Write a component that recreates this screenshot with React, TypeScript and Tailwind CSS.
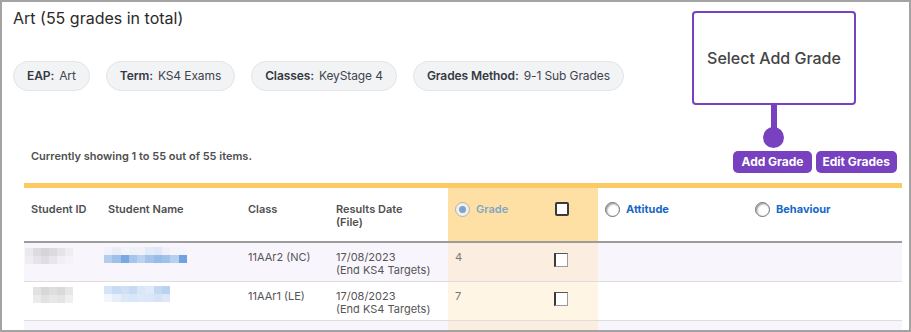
import React from 'react';

const cols = 'grid grid-cols-[77px_140px_88px_119px_100px_50px_150px_1fr]';

const chips = [
  { label: 'EAP:', value: 'Art' },
  { label: 'Term:', value: 'KS4 Exams' },
  { label: 'Classes:', value: 'KeyStage 4' },
  { label: 'Grades Method:', value: '9-1 Sub Grades' },
];

const rows = [
  {
    cls: '11AAr2 (NC)',
    grade: '4',
    rowBg: 'bg-[#f9f5fd]',
    gradeBg: 'bg-[#fbeddf]',
    idTop: ['bg-[#ebe9ed]', 'bg-[#dddbe0]', 'bg-[#d6d4d9]', 'bg-[#dcdadf]', 'bg-[#e5e3e8]', 'bg-[#efedf2]'],
    idBottom: ['bg-[#efedf1]', 'bg-[#e6e4e9]', 'bg-[#e0dee3]', 'bg-[#e8e6eb]', 'bg-[#f1eff4]', 'bg-[#f5f3f8]'],
    nameTop: ['bg-[#f3f1fb]', 'bg-[#e9edf9]', 'bg-[#f4f2fb]', 'bg-[#eef0fa]', 'bg-[#f2f1fb]', 'bg-[#e4ebf8]', 'bg-[#dfe8f7]', 'bg-[#f1f0fa]', 'bg-[#f5f3fc]', 'bg-[#f5f3fc]'],
    nameBottom: ['bg-[#b3cdee]', 'bg-[#9ec0ea]', 'bg-[#7aa9e2]', 'bg-[#a6c5ec]', 'bg-[#bad3f1]', 'bg-[#a5c4ec]', 'bg-[#98bce9]', 'bg-[#9fc1eb]', 'bg-[#b6d0f0]', 'bg-[#6fa2e0]'],
  },
  {
    cls: '11AAr1 (LE)',
    grade: '7',
    rowBg: 'bg-white',
    gradeBg: 'bg-[#fef5e4]',
    idTop: ['bg-[#ffffff]', 'bg-[#e2e2e4]', 'bg-[#d7d7d9]', 'bg-[#dededf]', 'bg-[#d9d9db]', 'bg-[#e6e6e7]'],
    idBottom: ['bg-[#ffffff]', 'bg-[#ebebec]', 'bg-[#e2e2e3]', 'bg-[#e8e8e9]', 'bg-[#e4e4e5]', 'bg-[#efeff0]'],
    nameTop: ['bg-[#d6e4f7]', 'bg-[#c8dbf4]', 'bg-[#cfe0f5]', 'bg-[#c6daf4]', 'bg-[#d9e6f7]', 'bg-[#e0ebf9]', 'bg-[#c3d8f3]', 'bg-[#b9d2f2]', 'bg-[#ffffff]', 'bg-[#ffffff]'],
    nameBottom: ['bg-[#f1f5fc]', 'bg-[#e6eef9]', 'bg-[#dce8f8]', 'bg-[#d9e6f7]', 'bg-[#dde8f8]', 'bg-[#dbe7f8]', 'bg-[#d6e3f6]', 'bg-[#dce7f7]', 'bg-[#ffffff]', 'bg-[#ffffff]'],
  },
];

const Mosaic: React.FC<{ top: string[]; bottom: string[]; w: string }> = ({ top, bottom, w }) => (
  <div className="flex flex-col">
    <div className="flex">
      {top.map((c, i) => (
        <div key={i} className={`${w} h-[8px] ${c}`}></div>
      ))}
    </div>
    <div className="flex">
      {bottom.map((c, i) => (
        <div key={i} className={`${w} h-[8px] ${c}`}></div>
      ))}
    </div>
  </div>
);

const RowCheckbox = () => (
  <div className="w-[14px] h-[14px] bg-white border-l-2 border-l-[#3a3a3a] border-t border-t-[#555] border-r border-r-[#9a9a9a] border-b border-b-[#9a9a9a]"></div>
);

const Radio = () => (
  <div className="w-[15px] h-[15px] rounded-full border border-[#6f6f6f] bg-white shadow-[inset_1px_1px_2px_rgba(0,0,0,0.45)]"></div>
);

export default function App() {
  return (
    <div className="w-[911px] h-[332px] overflow-hidden border-2 border-[#a3a3a3] bg-white relative font-['Inter',sans-serif]">
      <div className="pt-[5px] pl-[11px] text-[16px] leading-[22px] text-[#2a2a2a]">Art (55 grades in total)</div>

      <div className="flex gap-[16px] pl-[11px] mt-[32px]">
        {chips.map((c) => (
          <div key={c.label} className="h-[30px] flex items-center px-[13px] rounded-full border border-[#e2e4e8] bg-[#f2f3f5] text-[12px] tracking-[-0.1px] text-[#3f444c] whitespace-nowrap">
            <span className="font-semibold text-[#353a42]">{c.label}</span>
            <span className="ml-[5px]">{c.value}</span>
          </div>
        ))}
      </div>

      <div className="flex justify-between items-start mt-[58px] pl-[29px] pr-[12px]">
        <div className="text-[11px] leading-[14px] font-semibold text-[#4f4f4f]">Currently showing 1 to 55 out of 55 items.</div>
        <div className="flex gap-[4px] mt-[2px]">
          <button className="h-[22px] px-[8px] rounded-[5px] bg-[#7741bf] text-white text-[12px] font-bold">Add Grade</button>
          <button className="h-[22px] px-[7px] rounded-[5px] bg-[#7741bf] text-white text-[12px] font-bold">Edit Grades</button>
        </div>
      </div>

      <div className="ml-[22px] w-[878px] mt-[10px] border-t-[5px] border-[#fcca63]">
        <div className={`${cols} h-[55px] border-b-2 border-[#9c9c9c] text-[11px] leading-[13px] font-semibold text-[#505050]`}>
          <div className="pl-[7px] pt-[15px]">Student ID</div>
          <div className="pl-[7px] pt-[15px]">Student Name</div>
          <div className="pl-[7px] pt-[15px]">Class</div>
          <div className="pl-[7px] pt-[15px]">Results Date<br />(File)</div>
          <div className="bg-[#fee0a4] pl-[7px] pt-[14px] flex items-start gap-[6px]">
            <div className="w-[15px] h-[15px] rounded-full border border-[#b8b0a4] bg-[#f2efea] flex items-center justify-center">
              <div className="w-[7px] h-[7px] rounded-full bg-[#7aa5cc]"></div>
            </div>
            <span className="text-[#7fa6c7] pt-[1px]">Grade</span>
          </div>
          <div className="bg-[#fee0a4] pl-[7px] pt-[14px]">
            <div className="w-[14px] h-[14px] rounded-[2px] border-2 border-[#3a3a3a] bg-white"></div>
          </div>
          <div className="pl-[7px] pt-[14px] flex items-start gap-[6px]">
            <Radio />
            <span className="text-[#1668c8] font-bold pt-[1px]">Attitude</span>
          </div>
          <div className="pl-[7px] pt-[14px] flex items-start gap-[6px]">
            <Radio />
            <span className="text-[#1668c8] font-bold pt-[1px]">Behaviour</span>
          </div>
        </div>

        {rows.map((r, i) => (
          <div key={i} className={`${cols} h-[39px] border-b border-[#dddddd] ${r.rowBg} text-[11px] leading-[13px] text-[#555]`}>
            <div className="pl-[1px] pt-[5px]">
              <Mosaic top={r.idTop} bottom={r.idBottom} w="w-[8px]" />
            </div>
            <div className="pl-[3px] pt-[4px]">
              <Mosaic top={r.nameTop} bottom={r.nameBottom} w="w-[8.3px]" />
            </div>
            <div className="pl-[7px] pt-[8px]">{r.cls}</div>
            <div className="pl-[7px] pt-[8px]">17/08/2023<br />(End KS4 Targets)</div>
            <div className={`${r.gradeBg} pl-[7px] pt-[8px] text-[#777]`}>{r.grade}</div>
            <div className={`${r.gradeBg} pl-[6px] pt-[10px]`}>
              <RowCheckbox />
            </div>
            <div></div>
            <div></div>
          </div>
        ))}
        <div className={`${cols} h-[39px] bg-[#f9f5fd]`}>
          <div></div>
          <div></div>
          <div></div>
          <div></div>
          <div className="bg-[#fbeddf]"></div>
          <div className="bg-[#fbeddf]"></div>
          <div></div>
          <div></div>
        </div>
      </div>

      <div className="absolute left-[690px] top-[9px] w-[164px] h-[94px] rounded-[4px] border-2 border-[#7741bf] bg-white flex items-center justify-center text-[16px] font-medium text-[#444]">
        Select Add Grade
      </div>
      <div className="absolute left-[769px] top-[103px] w-[6px] h-[30px] bg-[#7741bf]"></div>
      <div className="absolute left-[761px] top-[125px] w-[21px] h-[21px] rounded-full bg-[#7741bf]"></div>
    </div>
  );
}
